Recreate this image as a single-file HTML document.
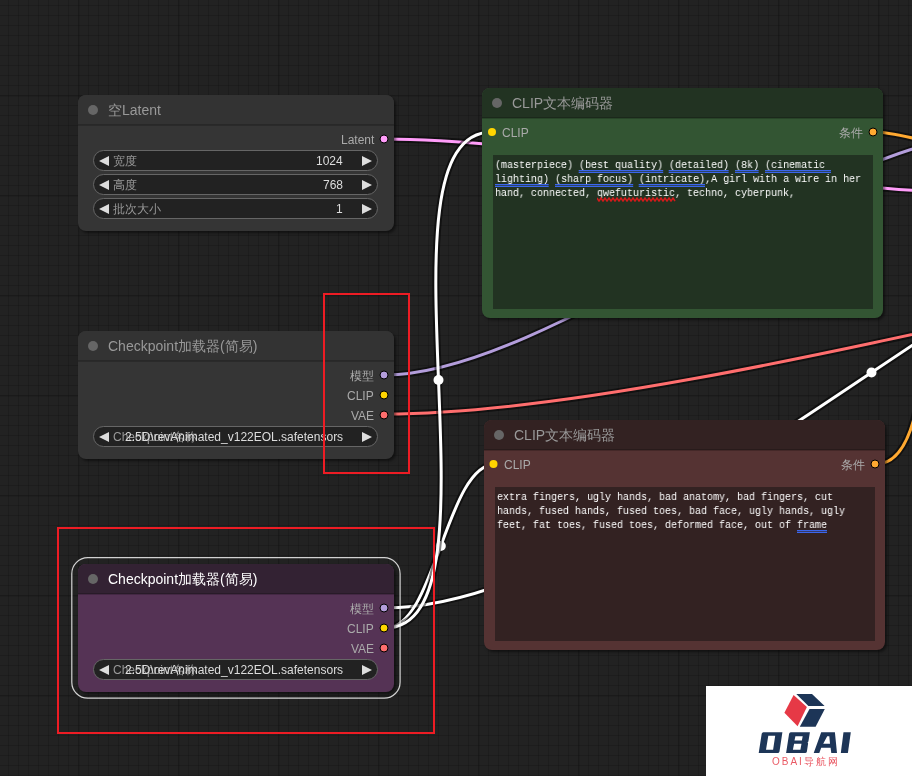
<!DOCTYPE html>
<html lang="zh">
<head>
<meta charset="utf-8">
<title>ComfyUI</title>
<style>
html,body{margin:0;padding:0;}
body{width:912px;height:776px;overflow:hidden;position:relative;background-color:#222;
 font-family:"Liberation Sans",sans-serif;
 background-image:
  linear-gradient(90deg,rgba(0,0,0,.09) 2px,transparent 2px),
  linear-gradient(180deg,rgba(0,0,0,.09) 2px,transparent 2px),
  linear-gradient(90deg,rgba(0,0,0,.15) 1px,transparent 1px),
  linear-gradient(180deg,rgba(0,0,0,.15) 1px,transparent 1px);
 background-size:100px 100px,100px 100px,10px 10px,10px 10px;
 background-position:78px 0,0 95px,8px 0,0 5px;}
#links,#dots{position:absolute;left:0;top:0;width:912px;height:776px;}
#links path{fill:none;stroke-linecap:butt;}
.node{position:absolute;border-radius:8px;box-shadow:2px 2px 3px rgba(0,0,0,.5);background:#353535;}
.title{position:absolute;left:0;top:0;right:0;height:30px;border-radius:8px 8px 0 0;background:#333;}
.title:after{content:"";position:absolute;left:0;right:0;top:29px;height:2px;background:rgba(0,0,0,.2);}
.tbox{position:absolute;left:10px;top:10px;width:10px;height:10px;border-radius:50%;background:#666;}
.ttext,.slab,.lab,.val,.ln,.wmt{will-change:transform;}
.ttext{position:absolute;left:30px;top:7px;font-size:14px;line-height:17px;color:#999;white-space:nowrap;}
.sel .ttext{color:#fff;}
.dot{position:absolute;width:8px;height:8px;border-radius:50%;}
.dot.out{width:8px;height:8px;border:1px solid #000;margin:-1px;}
.slab{position:absolute;font-size:12px;line-height:14px;color:#aaa;white-space:nowrap;}
.slab.r{text-align:right;}
.wid{position:absolute;left:15px;width:283px;height:19px;border:1px solid #666;border-radius:10.5px;background:#222;}
.wid .al,.wid .ar{position:absolute;top:5px;width:0;height:0;border-top:5px solid transparent;border-bottom:5px solid transparent;}
.wid .al{left:5px;border-right:10px solid #ddd;}
.wid .ar{right:5px;border-left:10px solid #ddd;}
.wid .lab{position:absolute;left:19px;top:3px;font-size:12px;line-height:14px;color:#999;white-space:nowrap;}
.wid .val{position:absolute;right:34px;top:3px;font-size:12px;line-height:14px;color:#ddd;white-space:nowrap;text-align:right;}
.ta{position:absolute;overflow:hidden;}
.ta .ln{position:absolute;left:2px;height:14px;white-space:pre;font-family:"Liberation Mono",monospace;font-size:11px;line-height:14px;color:#fff;transform:scaleX(.909);transform-origin:0 0;}
.ta .u{position:relative;}
.ta .u:after{content:"";position:absolute;left:0;right:0;top:11px;height:1px;border-top:1px solid #3b66ec;border-bottom:1px solid #3b66ec;background:rgba(59,102,236,.35);}
.red{position:absolute;border:2px solid #ed1c24;box-sizing:border-box;}
#wm{position:absolute;left:706px;top:686px;width:206px;height:90px;background:#fff;}
</style>
</head>
<body>
<svg id="links" viewBox="0 0 912 776">
<path d="M385.0 139.0C537.9 139.0 841.1 194.0 994.0 194.0" stroke="rgba(0,0,0,0.5)" stroke-width="7"/><path d="M385.0 139.0C537.9 139.0 841.1 194.0 994.0 194.0" stroke="#FF9CF9" stroke-width="3"/><circle cx="689.5" cy="166.5" r="5" fill="#FF9CF9" stroke="none"/>
<path d="M385.0 375.0C548.7 375.0 830.3 134.0 994.0 134.0" stroke="rgba(0,0,0,0.5)" stroke-width="7"/><path d="M385.0 375.0C548.7 375.0 830.3 134.0 994.0 134.0" stroke="#B39DDB" stroke-width="3"/><circle cx="689.5" cy="254.5" r="5" fill="#B39DDB" stroke="none"/>
<path d="M385.0 414.0C728.1 414.0 1395.9 189.0 1739.0 189.0" stroke="rgba(0,0,0,0.5)" stroke-width="7"/><path d="M385.0 414.0C728.1 414.0 1395.9 189.0 1739.0 189.0" stroke="#FF6E6E" stroke-width="3"/><circle cx="1062.0" cy="301.5" r="5" fill="#FF6E6E" stroke="none"/>
<path d="M874.0 132.0C904.5 132.0 963.5 154.0 994.0 154.0" stroke="rgba(0,0,0,0.5)" stroke-width="7"/><path d="M874.0 132.0C904.5 132.0 963.5 154.0 994.0 154.0" stroke="#FFA931" stroke-width="3"/><circle cx="934.0" cy="143.0" r="5" fill="#FFA931" stroke="none"/>
<path d="M876.0 464.0C953.0 464.0 903.0 174.0 980.0 174.0" stroke="rgba(0,0,0,0.5)" stroke-width="7"/><path d="M876.0 464.0C953.0 464.0 903.0 174.0 980.0 174.0" stroke="#FFA931" stroke-width="3"/><circle cx="928.0" cy="319.0" r="5" fill="#FFA931" stroke="none"/>
<path d="M385.0 608.0C655.3 608.0 1087.7 137.0 1358.0 137.0" stroke="rgba(0,0,0,0.5)" stroke-width="7"/><path d="M385.0 608.0C655.3 608.0 1087.7 137.0 1358.0 137.0" stroke="#FFFFFF" stroke-width="3"/><circle cx="871.5" cy="372.5" r="5" fill="#FFFFFF" stroke="none"/>
<path d="M386.0 628.0C435.3 628.0 446.2 464.0 495.5 464.0" stroke="rgba(0,0,0,0.5)" stroke-width="7"/><path d="M386.0 628.0C435.3 628.0 446.2 464.0 495.5 464.0" stroke="#FFFFFF" stroke-width="3"/><circle cx="440.8" cy="546.0" r="5" fill="#FFFFFF" stroke="none"/>
<path d="M385.0 628.0C511.9 628.0 365.1 132.0 492.0 132.0" stroke="rgba(0,0,0,0.5)" stroke-width="7"/><path d="M385.0 628.0C511.9 628.0 365.1 132.0 492.0 132.0" stroke="#FFFFFF" stroke-width="3"/><circle cx="438.5" cy="380.0" r="5" fill="#FFFFFF" stroke="none"/>
</svg>

<!-- Empty Latent -->
<div class="node" style="left:78px;top:95px;width:316px;height:136px;">
  <div class="title"><div class="tbox"></div><div class="ttext">空Latent</div></div>
  <div class="slab r" style="right:20px;top:38px;">Latent</div>
  <div class="wid" style="top:55px;"><i class="al"></i><span class="lab">宽度</span><span class="val">1024</span><i class="ar"></i></div>
  <div class="wid" style="top:79px;"><i class="al"></i><span class="lab">高度</span><span class="val">768</span><i class="ar"></i></div>
  <div class="wid" style="top:103px;"><i class="al"></i><span class="lab">批次大小</span><span class="val">1</span><i class="ar"></i></div>
</div>

<!-- Checkpoint loader 1 -->
<div class="node" style="left:78px;top:331px;width:316px;height:128px;">
  <div class="title"><div class="tbox"></div><div class="ttext">Checkpoint加载器(简易)</div></div>
  <div class="slab r" style="right:20px;top:38px;">模型</div>
  <div class="slab r" style="right:20px;top:58px;">CLIP</div>
  <div class="slab r" style="right:20px;top:78px;">VAE</div>
  <div class="wid" style="top:95px;"><i class="al"></i><span class="lab">Checkpoint名称</span><span class="val">2.5D\revAnimated_v122EOL.safetensors</span><i class="ar"></i></div>
</div>

<!-- Checkpoint loader 2 (selected) -->
<div class="node sel" style="left:78px;top:564px;width:316px;height:128px;background:#553355;">
  <div class="title" style="background:#332233;"><div class="tbox"></div><div class="ttext">Checkpoint加载器(简易)</div></div>
  <div class="slab r" style="right:20px;top:38px;">模型</div>
  <div class="slab r" style="right:20px;top:58px;">CLIP</div>
  <div class="slab r" style="right:20px;top:78px;">VAE</div>
  <div class="wid" style="top:95px;"><i class="al"></i><span class="lab">Checkpoint名称</span><span class="val">2.5D\revAnimated_v122EOL.safetensors</span><i class="ar"></i></div>
</div>

<!-- CLIP text encode (positive, green) -->
<div class="node" style="left:482px;top:88px;width:401px;height:230px;background:#335533;">
  <div class="title" style="background:#223322;"><div class="tbox"></div><div class="ttext">CLIP文本编码器</div></div>
  <div class="slab" style="left:20px;top:38px;">CLIP</div>
  <div class="slab r" style="right:20px;top:38px;">条件</div>
  <div class="ta" style="left:11px;top:67px;width:380px;height:154px;background:#223322;">
    <div class="ln" style="top:3px;">(masterpiece) <span class="u">(best quality)</span> <span class="u">(detailed)</span> <span class="u">(8k)</span> <span class="u">(cinematic </span></div>
    <div class="ln" style="top:17px;"><span class="u">lighting)</span> <span class="u">(sharp focus)</span> <span class="u">(intricate)</span>,A girl with a wire in her</div>
    <div class="ln" style="top:31px;">hand, connected, <span class="w">qwefuturistic</span>, techno, cyberpunk,</div>
    <svg style="position:absolute;left:104px;top:41.5px;" width="80" height="6" viewBox="0 0 80 6"><path d="M0 1 L2 4.2 L4 1 L6 4.2 L8 1 L10 4.2 L12 1 L14 4.2 L16 1 L18 4.2 L20 1 L22 4.2 L24 1 L26 4.2 L28 1 L30 4.2 L32 1 L34 4.2 L36 1 L38 4.2 L40 1 L42 4.2 L44 1 L46 4.2 L48 1 L50 4.2 L52 1 L54 4.2 L56 1 L58 4.2 L60 1 L62 4.2 L64 1 L66 4.2 L68 1 L70 4.2 L72 1 L74 4.2 L76 1 L78 4.2" fill="none" stroke="#d41b1b" stroke-width="1.5" stroke-linejoin="round"/></svg>
  </div>
</div>

<!-- CLIP text encode (negative, red) -->
<div class="node" style="left:484px;top:420px;width:401px;height:230px;background:#553333;">
  <div class="title" style="background:#332222;"><div class="tbox"></div><div class="ttext">CLIP文本编码器</div></div>
  <div class="slab" style="left:20px;top:38px;">CLIP</div>
  <div class="slab r" style="right:20px;top:38px;">条件</div>
  <div class="ta" style="left:11px;top:67px;width:380px;height:154px;background:#332222;">
    <div class="ln" style="top:3px;">extra fingers, ugly hands, bad anatomy, bad fingers, cut </div>
    <div class="ln" style="top:17px;">hands, fused hands, fused toes, bad face, ugly hands, ugly </div>
    <div class="ln" style="top:31px;">feet, fat toes, fused toes, deformed face, out of <span class="u">frame</span></div>
  </div>
</div>


<svg id="dots" viewBox="0 0 912 776">
  <rect x="71.8" y="557.7" width="328.3" height="140.5" rx="16" ry="16" fill="none" stroke="rgba(255,255,255,.8)" stroke-width="1.2"/>
  <g stroke="#000" stroke-width="1">
    <circle cx="384" cy="139" r="4" fill="#FF9CF9"/>
    <circle cx="384" cy="375" r="4" fill="#B39DDB"/>
    <circle cx="384" cy="395" r="4" fill="#FFD500"/>
    <circle cx="384" cy="415" r="4" fill="#FF6E6E"/>
    <circle cx="384" cy="608" r="4" fill="#B39DDB"/>
    <circle cx="384" cy="628" r="4" fill="#FFD500"/>
    <circle cx="384" cy="648" r="4" fill="#FF6E6E"/>
    <circle cx="873" cy="132" r="4" fill="#FFA931"/>
    <circle cx="875" cy="464" r="4" fill="#FFA931"/>
  </g>
  <circle cx="492" cy="132" r="4" fill="#FFD500"/>
  <circle cx="493.5" cy="464" r="4" fill="#FFD500"/>
</svg>

<!-- red annotation rectangles -->
<div class="red" style="left:323px;top:293px;width:87px;height:181px;"></div>
<div class="red" style="left:57px;top:527px;width:378px;height:207px;"></div>

<!-- watermark -->
<div id="wm">
  <svg width="206" height="90" viewBox="706 686 206 90">
    <polygon points="793.6,694.9 806.9,707.1 797.6,726.2 784.4,712.7" fill="#e63946"/>
    <polygon points="796.3,694 812,694 824.6,705.9 808.4,705.9" fill="#1d3557"/>
    <polygon points="809.5,708.9 824.8,708.9 815.6,726.7 799.8,726.7" fill="#1d3557"/>
    <g fill="#1d3557" fill-rule="evenodd">
      <path d="M763.4 732.3H782.4L779.5 751.4Q779.2 752.9 777.7 752.9H758.7L761.7 733.8Q762 732.3 763.4 732.3ZM768.3 735.8L766 749.7H773.1L775.2 735.8Z"/>
      <path d="M790.8 732.3H809.9L808.4 741.4L807.6 742.4L808.1 743.4L806.9 751.4Q806.6 752.9 805.1 752.9H786.1L789.1 733.8Q789.4 732.3 790.8 732.3ZM795.4 736.2L794.5 740.5H801.9L802.7 736.2ZM794.1 743.8L792.9 749.7H800.4L801.5 743.8Z"/>
      <path d="M821.2 732.3H834.9L837 753H831.3L830.6 747.7H821.2L819.3 753H813.7ZM827.2 736.2L823.2 743.8H830L829.3 736.2Z"/>
      <path d="M843.5 732.3H850.8L847.9 753H840.8Z"/>
    </g>
  </svg>
  <div class="wmt" style="position:absolute;left:66px;top:69.5px;font:10px/11px 'Liberation Sans',sans-serif;color:#ea5a65;letter-spacing:2px;white-space:nowrap;">OBAI导航网</div>
</div>
</body>
</html>
